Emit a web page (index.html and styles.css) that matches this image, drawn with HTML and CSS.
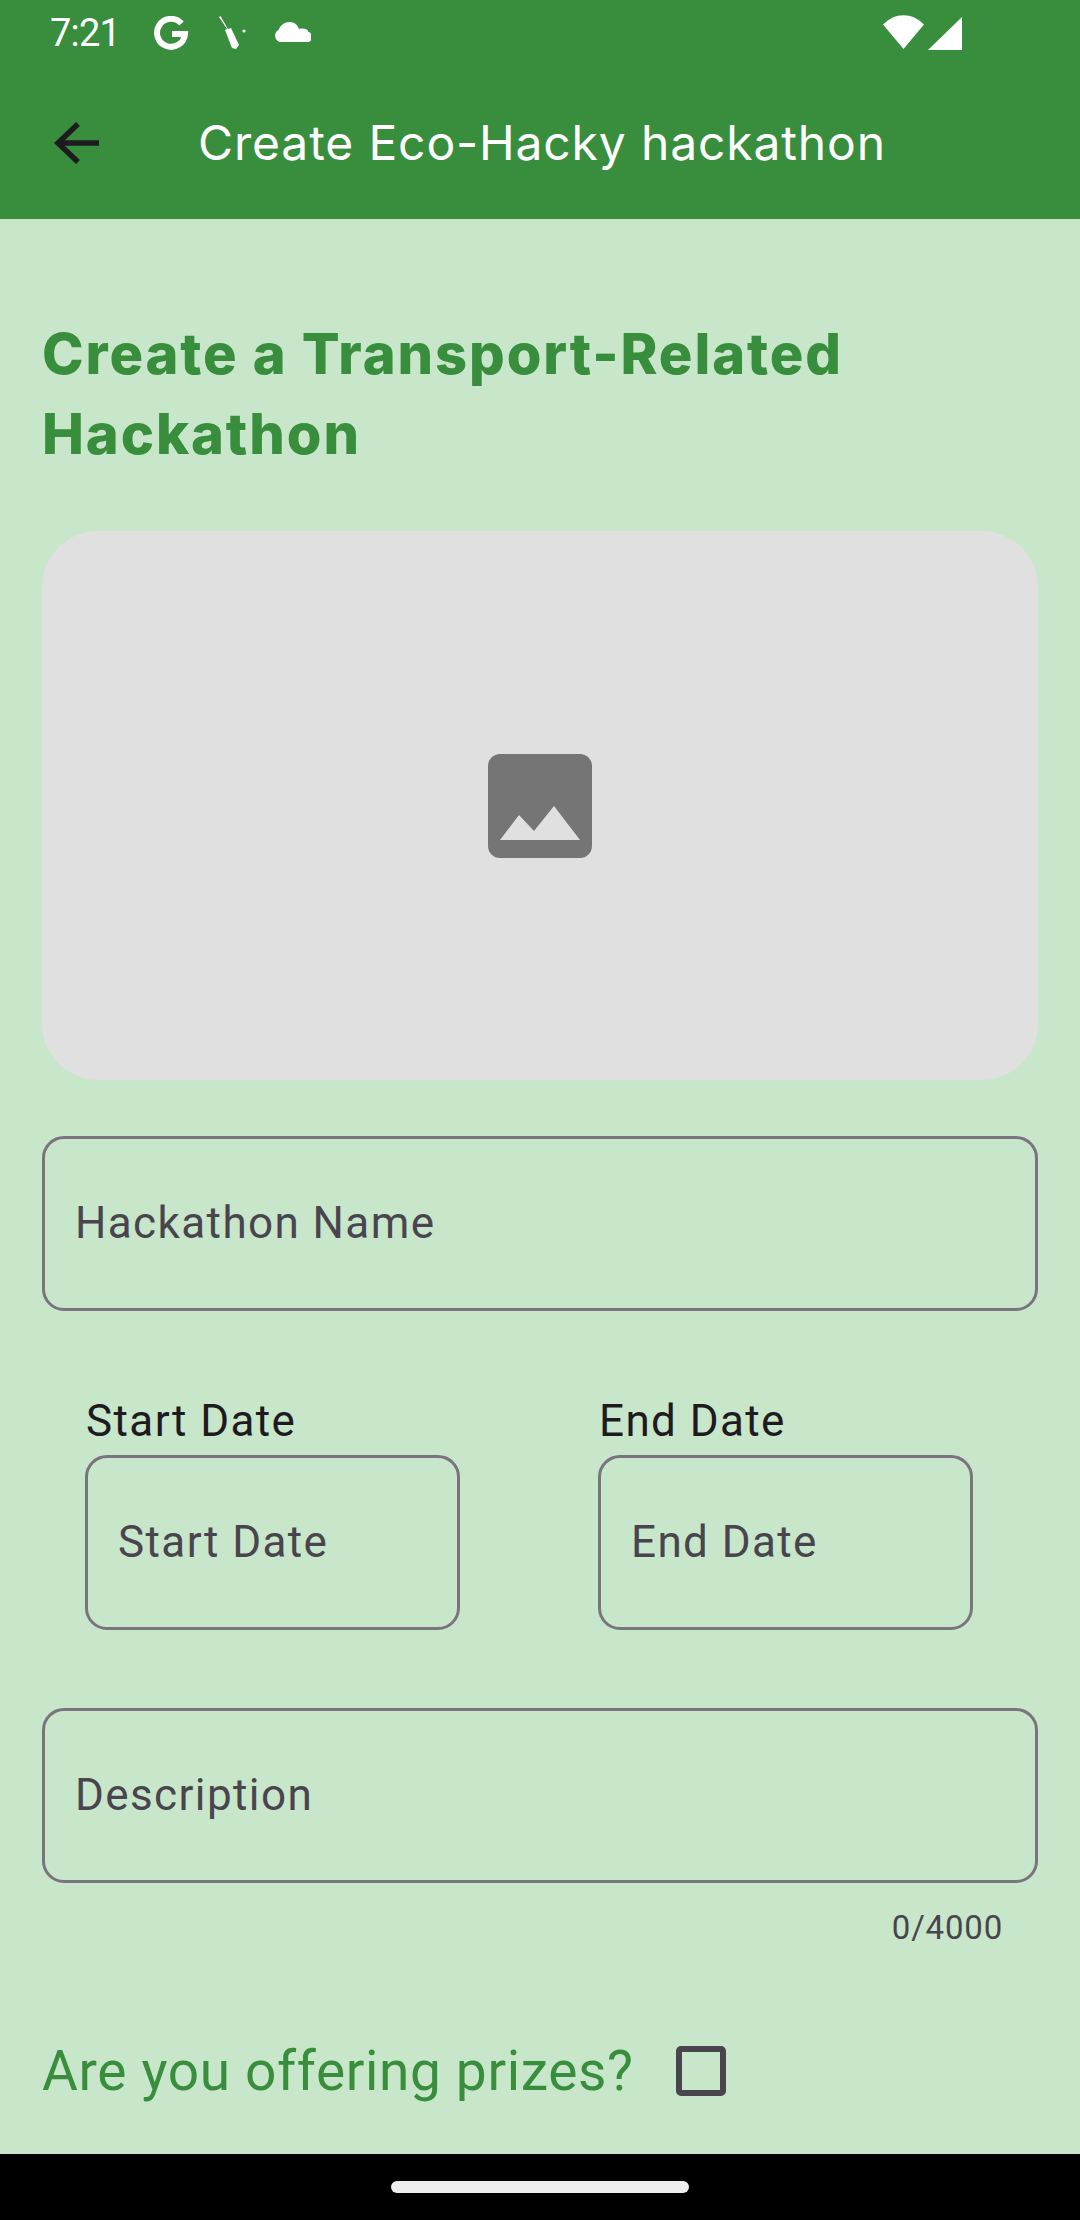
FILE: index.html
```html
<!DOCTYPE html>
<html lang="en">
<head>
    <meta charset="UTF-8">
    <meta name="viewport" content="width=device-width, initial-scale=1.0">
    <title>Create Eco-Hacky hackathon</title>
    <link rel="stylesheet" href="styles.css">
</head>
<body>

<!-- Status bar -->
<div class="status-bar">
    <span class="time">7:21</span>
    <svg class="icon-g" width="36" height="34" viewBox="0 0 36 34"><path d="M28.5 7.5A14 14 0 1 0 32 18H19" fill="none" stroke="#fff" stroke-width="6"/></svg>
    <svg class="icon-tool" width="28" height="34" viewBox="0 0 28 34"><path d="M0 1L1.500 0L9 13L12 12L20 29L17 33L13 32L6 14L8 13Z" fill="#fff"/><circle cx="25" cy="15" r="1.600" fill="#fff"/></svg>
    <svg class="icon-cloud" width="38" height="20" viewBox="0 0 38 20"><path d="M7 20A6.500 6.500 0 0 1 5.500 8C7.500 3 11.500 0 16.500 0C21 0 24.500 2.500 26 7C27 6.500 28 6.500 29 6.500C33 6.500 35 8 35.500 10A5 5 0 0 1 33 20Z" fill="#fff"/></svg>
    <span class="status-spacer"></span>
    <svg class="icon-wifi" width="41" height="34" viewBox="0 0 41 34"><path d="M0 9.500C12 -3 29 -3 41 9.500L20.500 34Z" fill="#fff"/></svg>
    <svg class="icon-signal" width="34" height="33" viewBox="0 0 34 33"><path d="M34 0V33H0Z" fill="#fff"/></svg>
</div>

<!-- App bar -->
<div class="app-bar">
    <svg class="back" width="46" height="44" viewBox="0 0 46 44"><path d="M45 22H6M24 3L4 22L24 41" fill="none" stroke="#1d1b20" stroke-width="5.500"/></svg>
    <h1 class="app-title">Create Eco-Hacky hackathon</h1>
</div>

<div class="content">
    <h2 class="heading">Create a Transport-Related Hackathon</h2>

    <div class="image-box">
        <svg width="104" height="104" viewBox="0 0 104 104">
            <rect width="104" height="104" rx="12" fill="#757575"/>
            <path d="M12 86L31 61L46 77L66 52L92 86Z" fill="#e0e0e0"/>
        </svg>
    </div>

    <form>
        <input class="field" type="text" placeholder="Hackathon Name">

        <div class="date-row">
            <div class="date-col">
                <label>Start Date</label>
                <input class="field" type="text" placeholder="Start Date">
            </div>
            <div class="date-col">
                <label>End Date</label>
                <input class="field" type="text" placeholder="End Date">
            </div>
        </div>

        <input class="field description" type="text" placeholder="Description">
        <p class="counter">0/4000</p>

        <div class="prizes">
            <span>Are you offering prizes?</span>
            <input class="checkbox" type="checkbox">
        </div>
    </form>
</div>

<!-- Gesture nav -->
<div class="nav-bar"><div class="pill"></div></div>

</body>
</html>
```

FILE: styles.css
```css
* {
    box-sizing: border-box;
}
body {
    margin: 0;
    width: 1080px;
    height: 2220px;
    overflow: hidden;
    display: flex;
    flex-direction: column;
    background-color: #c8e6c9;
    font-family: Roboto, sans-serif;
}
.status-bar {
    height: 66px;
    display: flex;
    align-items: center;
    padding: 0 118px 0 50px;
    background-color: #388e3c;
    color: white;
}
.time {
    font-size: 38px;
    letter-spacing: -0.8px;
    width: 103px;
}
.icon-tool {
    margin-left: 30px;
}
.icon-cloud {
    margin-left: 26px;
    margin-top: -2px;
}
.status-spacer {
    flex: 1;
}
.icon-wifi {
    margin-top: -2px;
}
.icon-signal {
    margin-left: 4px;
}
.app-bar {
    height: 153px;
    display: flex;
    align-items: center;
    padding-left: 54px;
    background-color: #388e3c;
}
.back {
    flex-shrink: 0;
}
.app-title {
    margin: 0 0 0 98px;
    font-family: Inter, sans-serif;
    font-size: 48px;
    font-weight: 400;
    letter-spacing: 0.85px;
    color: white;
}
.content {
    flex: 1;
    padding: 95px 42px 0;
}
.heading {
    margin: 0 0 57px;
    font-family: Inter, sans-serif;
    font-size: 56px;
    font-weight: 800;
    line-height: 80px;
    letter-spacing: 1.9px;
    color: #388e3c;
}
.image-box {
    height: 549px;
    margin-bottom: 56px;
    display: flex;
    align-items: center;
    justify-content: center;
    background-color: #e0e0e0;
    border-radius: 56px;
}
.field {
    display: block;
    width: 100%;
    height: 175px;
    padding: 0 30px 2px;
    background: transparent;
    border: 3px solid #79747e;
    border-radius: 22px;
    font-family: Roboto, sans-serif;
    font-size: 44px;
    letter-spacing: 1.4px;
    color: #49454f;
}
.field::placeholder {
    color: #49454f;
    opacity: 1;
}
.date-row {
    display: flex;
    gap: 138px;
    margin-top: 84px;
    padding-left: 43px;
}
.date-col {
    width: 375px;
}
.date-col label {
    display: block;
    padding: 0 0 8px 1px;
    font-size: 44px;
    line-height: 52px;
    letter-spacing: 1.4px;
    color: #1d1b20;
}
.description {
    margin-top: 78px;
}
.counter {
    margin: 25px 35px 0 0;
    font-size: 33px;
    line-height: 40px;
    letter-spacing: 0.8px;
    text-align: right;
    color: #49454f;
}
.prizes {
    display: flex;
    align-items: center;
    gap: 42px;
    margin-top: 91px;
    font-size: 55px;
    line-height: 64px;
    letter-spacing: 0.65px;
    color: #388e3c;
}
.checkbox {
    appearance: none;
    width: 50px;
    height: 50px;
    margin: 0;
    background: transparent;
    border: 6px solid #49454f;
    border-radius: 5px;
}
.nav-bar {
    height: 66px;
    display: flex;
    justify-content: center;
    padding-top: 27px;
    background-color: black;
}
.pill {
    width: 298px;
    height: 12px;
    border-radius: 6px;
    background-color: #eeeeee;
}
```
